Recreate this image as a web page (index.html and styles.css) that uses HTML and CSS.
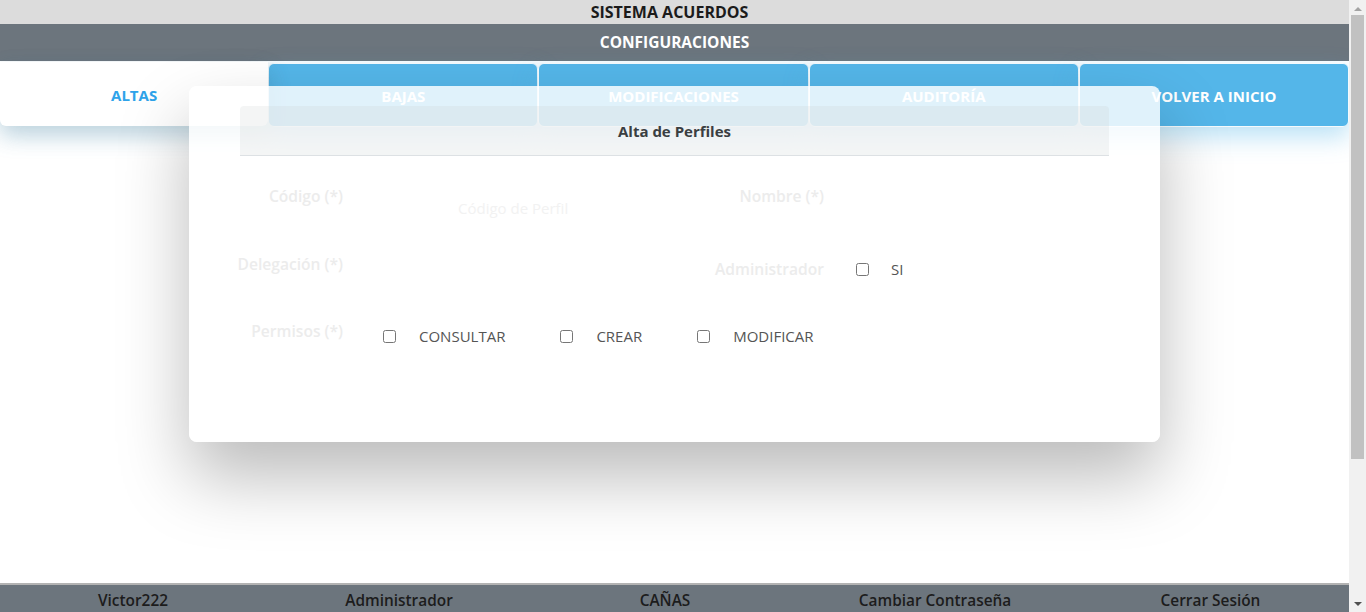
FILE: index.html
```html
<!DOCTYPE html>
<html lang="es">
<head>
<meta charset="utf-8">
<title>Sistema Acuerdos - Configuraciones</title>
<link rel="stylesheet" href="styles.css">
</head>
<body>
<div class="page">
  <header class="topbar">SISTEMA ACUERDOS</header>
  <div class="subbar">CONFIGURACIONES</div>
  <nav class="tabs">
    <a class="tab tab-active">ALTAS</a>
    <a class="tab">BAJAS</a>
    <a class="tab">MODIFICACIONES</a>
    <a class="tab">AUDITORÍA</a>
    <a class="tab">VOLVER A INICIO</a>
  </nav>

  <div class="modal">
    <div class="modal-header">Alta de Perfiles</div>
    <form class="form">
      <div class="row row-1">
        <label class="lbl lbl-left">Código (*)</label>
        <input class="field field-code" type="text" placeholder="Código de Perfil">
        <label class="lbl lbl-right">Nombre (*)</label>
        <input class="field field-name" type="text">
      </div>
      <div class="row row-2">
        <label class="lbl lbl-left">Delegación (*)</label>
        <div class="field-spacer"></div>
        <label class="lbl lbl-right lbl-admin">Administrador</label>
        <div class="checks checks-admin">
          <label class="opt"><input type="checkbox"><span>SI</span></label>
        </div>
      </div>
      <div class="row row-3">
        <label class="lbl lbl-left lbl-perm">Permisos (*)</label>
        <div class="checks checks-perm">
          <label class="opt"><input type="checkbox"><span>CONSULTAR</span></label>
          <label class="opt"><input type="checkbox"><span>CREAR</span></label>
          <label class="opt"><input type="checkbox"><span>MODIFICAR</span></label>
        </div>
      </div>
    </form>
  </div>
</div>

<footer class="footer">
  <div class="foot-item">Victor222</div>
  <div class="foot-item">Administrador</div>
  <div class="foot-item">CAÑAS</div>
  <div class="foot-item">Cambiar Contraseña</div>
  <div class="foot-item">Cerrar Sesión</div>
</footer>

<div class="scrollbar" aria-hidden="true">
  <div class="sb-arrow sb-up"></div>
  <div class="sb-track"><div class="sb-thumb"></div></div>
  <div class="sb-arrow sb-down"></div>
</div>
</body>
</html>
```

FILE: styles.css
```css
html {
  overflow: hidden;
}

body {
  margin: 0;
  width: 1349px;
  height: 612px;
  font-family: "Open Sans", "Noto Sans", sans-serif;
  background: #fff;
}

.page {
  position: relative;
  height: 612px;
}

.topbar {
  height: 24px;
  background: #dcdcdc;
  color: #1b1b1b;
  text-align: center;
  font-weight: 700;
  font-size: 16px;
  line-height: 24px;
  padding-right: 10px;
}

.subbar {
  height: 37px;
  background: #6c757d;
  color: #fff;
  text-align: center;
  font-weight: 700;
  font-size: 15.5px;
  line-height: 37px;
}

.tabs {
  display: flex;
  height: 66px;
}

.tab {
  flex: 1 1 0;
  margin-top: 2px;
  border: 1px solid #f4fafd;
  border-radius: 6px;
  background: #54b6e9;
  color: #fff;
  text-align: center;
  font-weight: 700;
  font-size: 15px;
  line-height: 59px;
  padding-top: 3px;
  box-sizing: border-box;
  box-shadow: 0 10px 24px rgba(84, 182, 233, 0.4);
}

.tab-active {
  margin-top: 1px;
  margin-bottom: 1px;
  border: none;
  border-radius: 0 0 6px 6px;
  background: #fff;
  color: #2ea3ea;
  padding-top: 2px;
  line-height: 62px;
  box-shadow: 0 8px 24px rgba(0, 0, 0, 0.12), 0 10px 22px rgba(84, 182, 233, 0.25);
  position: relative;
  z-index: 1;
}

.modal {
  position: absolute;
  top: 86px;
  left: 0;
  right: 0;
  margin: 0 auto;
  width: 971px;
  height: 356px;
  box-sizing: border-box;
  padding: 20px 51px 0;
  border-radius: 8px;
  background: rgba(255, 255, 255, 0.82);
  box-shadow: 0 35px 70px rgba(0, 0, 0, 0.27);
  z-index: 5;
}

.modal-header {
  height: 49px;
  border-bottom: 1px solid #dde1e4;
  border-radius: 4px 4px 0 0;
  background: rgba(195, 200, 204, 0.19);
  color: #3a3e42;
  text-align: center;
  font-weight: 700;
  font-size: 15px;
  line-height: 50px;
}

.form {
  margin: 0 -40px;
  padding-top: 6px;
}

.row {
  display: flex;
  align-items: flex-start;
}

.row-1 { height: 68px; }
.row-2 { height: 68px; }
.row-3 { height: 67px; }

.lbl {
  font-weight: 600;
  font-size: 15.6px;
  line-height: 22px;
  color: #ececec;
  text-align: right;
  white-space: nowrap;
  padding-top: 23px;
}

.lbl-left {
  width: 143px;
  flex: none;
}

.lbl-right {
  width: 124px;
  flex: none;
}

.lbl-admin {
  padding-top: 28px;
}

.lbl-perm {
  padding-top: 22px;
}

.field {
  margin-top: 27px;
  height: 38px;
  box-sizing: border-box;
  border: none;
  background: transparent;
  padding: 0 12px;
  font-family: "Open Sans", sans-serif;
  font-size: 15px;
}

.field::placeholder {
  color: #f2f2f2;
}

.field-code {
  margin-left: 103px;
  width: 254px;
  flex: none;
}

.field-name {
  margin-left: 36px;
  flex: 1 1 auto;
  min-width: 0;
}

.field-spacer {
  width: 357px;
  flex: none;
}

.checks {
  display: flex;
  gap: 55px;
  padding-top: 28px;
}

.checks-admin {
  margin-left: 32px;
}

.checks-perm {
  margin-left: 40px;
  padding-top: 27px;
}

.opt {
  display: flex;
  align-items: center;
  font-size: 15px;
  line-height: 22px;
  color: #555;
}

.opt input {
  margin: 0;
  width: 13px;
  height: 13px;
}

.opt span {
  margin-left: 23px;
}

.checks-admin .opt span {
  margin-left: 22px;
}

.footer {
  position: fixed;
  left: 0;
  right: 17px;
  bottom: 0;
  height: 27px;
  overflow: hidden;
  border-top: 2px solid #b3b3b3;
  background: #6c757d;
  display: grid;
  grid-template-columns: 266px 266px 266px 274px 1fr;
  z-index: 10;
}

.foot-item {
  padding-top: 3px;
  text-align: center;
  font-weight: 600;
  font-size: 15.4px;
  line-height: 25px;
  color: #1c1c1c;
  white-space: nowrap;
}

.scrollbar {
  position: fixed;
  top: 0;
  right: 0;
  bottom: 0;
  width: 17px;
  background: #f1f1f1;
  display: flex;
  flex-direction: column;
  z-index: 20;
}

.sb-arrow {
  height: 17px;
  flex: none;
  display: flex;
  align-items: center;
  justify-content: center;
}

.sb-up::before {
  content: "";
  border-left: 4px solid transparent;
  border-right: 4px solid transparent;
  border-bottom: 4px solid #a3a3a3;
}

.sb-down::before {
  content: "";
  border-left: 4px solid transparent;
  border-right: 4px solid transparent;
  border-top: 4px solid #505050;
}

.sb-track {
  flex: 1 1 auto;
  padding: 0 2px;
}

.sb-thumb {
  height: 444px;
  margin-top: -2px;
  background: #c1c1c1;
}
```
